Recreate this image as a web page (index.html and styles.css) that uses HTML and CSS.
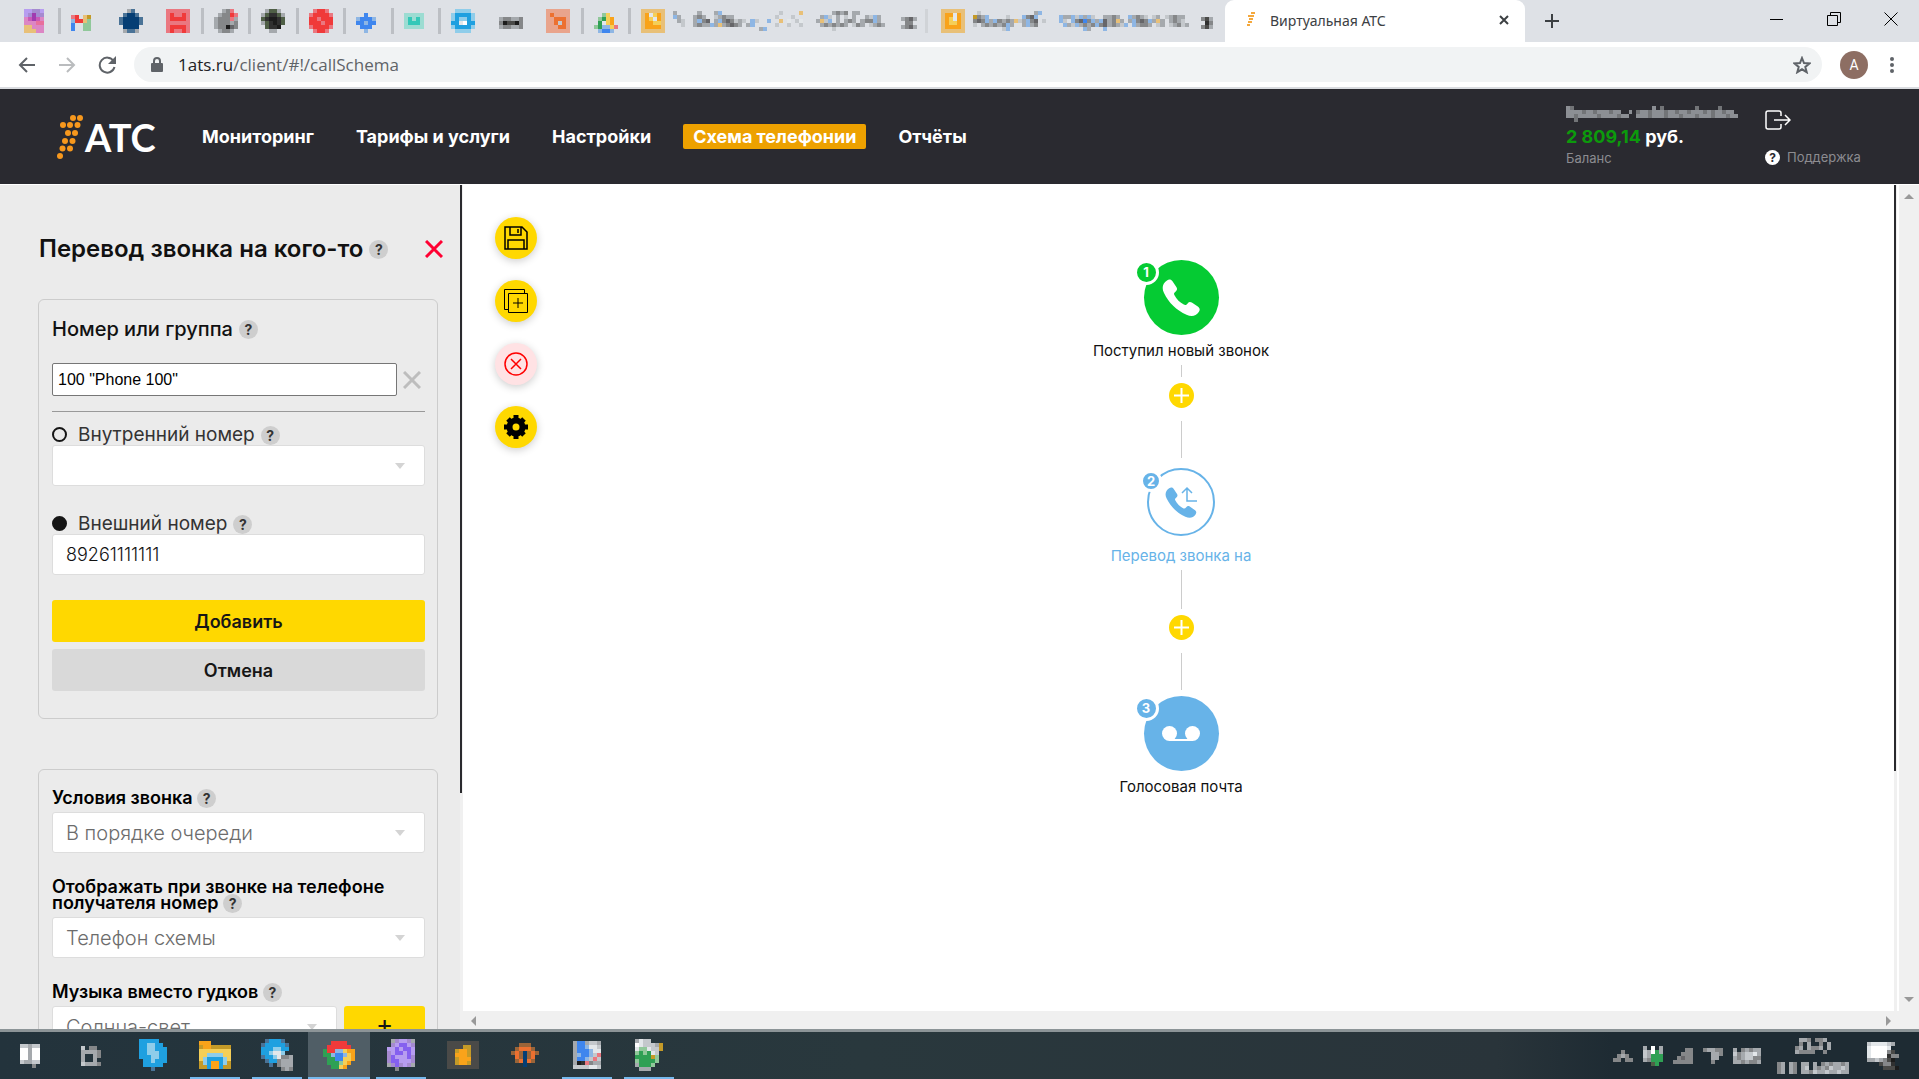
FILE: index.html
```html
<!DOCTYPE html>
<html lang="ru">
<head>
<meta charset="utf-8">
<title>Виртуальная АТС</title>
<link rel="stylesheet" href="styles.css">
</head>
<body>
<div class="tabs">
  <div class="pins">
    <span><svg class="mosaic" data-cells="uuvvu/uvPvv/mMPMm/mmmkk/oommm/ooomm"></svg></span>
    <span class="bare"><svg class="mosaic" data-cells="...../rR.oO/bRRog/B..gg/B..gg"></svg></span>
    <span class="bare"><svg class="mosaic" data-cells="..7n../.nNNn./nNNNNn/nNNNNn/.NNNN./.7nn7."></svg></span>
    <span><svg class="mosaic" data-cells="rrrrrr/rRrrRr/rRRRRr/rrrrrr/rRRRRr/rRrrRr"></svg></span>
    <span><svg class="mosaic" data-cells="..76r./.766Rr/7666r7/766676/766256/.7667."></svg></span>
    <span><svg class="mosaic" data-cells=".7DD7./7D33D7/D3223D/7D323D/.D332./..77.."></svg></span>
    <span><svg class="mosaic" data-cells=".rRRr./rRRRRr/RRrRRR/RRRrRR/rRRRRr/.rRRr."></svg></span>
    <span><svg class="mosaic" data-cells="...../..B../bBBBb/BBbBB/.BBB./..b.."></svg></span>
    <span><svg class="mosaic" data-cells="...../ttttt/tTtTt/tTTTt/ttttt/....."></svg></span>
    <span class="bare"><svg class="mosaic" data-cells=".ssss./sSSSSs/sSssSs/SS9wSS/sSSSSs/.ssss."></svg></span>
    <span class="bare"><svg class="mosaic" data-cells="....../....../766776/624426/766776/......"></svg></span>
    <span><svg class="mosaic" data-cells="pppppp/pHpppp/ppHHHp/ppH8Hp/pppHHp/pppppp"></svg></span>
    <span><svg class="mosaic" data-cells="....../..gy../.gGyY./.G9yY./gGbbyr/.bBBb."></svg></span>
  </div>
  <div class="oldtab">
    <svg class="mosaic" data-cells="oooooo/oY9yYo/oYy9Yo/oYYyyo/oYYYYo/oooooo"></svg>
    <svg class="mosaic" preserveAspectRatio="none" data-cells="7.....7...7b..............8....o.......7676.77....../b7...767..87677..........8...8......7b8.7.8.7..78b7./.78..7b65.7b656878.b8..b..o.9.89...7o8b.7.767.766b7/..8..7677b7o76567.7b.....8..8..8....7676767.867.8767./.....................7b................8............"></svg>
    <svg class="mosaic x" data-cells="./7657/.66./7657"></svg>
  </div>
  <div class="oldtab">
    <svg class="mosaic" data-cells="oooooo/oYY9Yo/oYy9Yo/oYyyYo/oYYYYo/oooooo"></svg>
    <svg class="mosaic" preserveAspectRatio="none" data-cells=".8.............7b..................................../O67b....8...b65b.....b77b8b7b8..7767..b7678.87.87677./656b7b6767o87b65.8...b8.b65B6b7b576o7.7b656b7o7.7678/8.767676b7..7b76......b78b7676b657678b.b7667.87.87687/.......8b..................b7...b...................."></svg>
    <svg class="mosaic x" data-cells="./647/.36/647"></svg>
  </div>
  <div class="tab">
    <svg width="12" height="16" viewBox="0 0 12 16"><path d="M7 1h4M4 4h6M5 7h4M4 10h4M3 13h3" stroke="#f4a83d" stroke-width="2"/></svg>
    <span>Виртуальная АТС</span>
    <svg width="12" height="12" viewBox="0 0 12 12"><path d="M2 2l8 8M10 2l-8 8" stroke="#3c4043" stroke-width="2"/></svg>
  </div>
  <svg class="newtab" width="16" height="16" viewBox="0 0 16 16"><path d="M8 1v14M1 8h14" stroke="#3c4043" stroke-width="2"/></svg>
  <div class="win">
    <svg width="14" height="14" viewBox="0 0 14 14"><path d="M0 7.500h13" stroke="#000"/></svg>
    <svg width="14" height="14" viewBox="0 0 14 14" fill="none" stroke="#000"><path d="M.5 3.500h10v10h-10zM3.500 3.500v-3h10v10h-3"/></svg>
    <svg width="14" height="14" viewBox="0 0 14 14"><path d="M.5.5l13 13M13.500.5l-13 13" stroke="#000"/></svg>
  </div>
</div>
<div class="toolbar">
  <svg width="18" height="18" viewBox="0 0 18 18" fill="none" stroke="#5f6368" stroke-width="2"><path d="M17 9H2M9 2L2 9l7 7"/></svg>
  <svg width="18" height="18" viewBox="0 0 18 18" fill="none" stroke="#babcbe" stroke-width="2"><path d="M1 9h15M9 2l7 7-7 7"/></svg>
  <svg width="18" height="18" viewBox="0 0 18 18" fill="none" stroke="#5f6368" stroke-width="2"><path d="M15.500 5A7.500 7.500 0 1 0 16.500 11"/><path d="M18 0v8h-8z" fill="#5f6368" stroke="none"/></svg>
  <div class="address">
    <svg width="12" height="16" viewBox="0 0 12 16"><path d="M1 6h10q1 0 1 1v7q0 1-1 1H1q-1 0-1-1V7q0-1 1-1z" fill="#5f6368"/><path d="M3 7V4a3 3 0 0 1 6 0v3" fill="none" stroke="#5f6368" stroke-width="2"/></svg>
    <span class="url"><b>1ats.ru</b>/client/#!/callSchema</span>
    <svg width="18" height="18" viewBox="0 0 18 18" fill="none" stroke="#5f6368" stroke-width="2"><path d="M9 2l2 5 5.500.4-4.200 3.500 1.400 5.300L9 13.300l-4.700 2.900 1.400-5.300L1.500 7.400 7 7z"/></svg>
  </div>
  <span class="avatar">A</span>
  <svg width="4" height="18" viewBox="0 0 4 18" fill="#5f6368"><circle cx="2" cy="3" r="2"/><circle cx="2" cy="9" r="2"/><circle cx="2" cy="15" r="2"/></svg>
</div>
<header class="header">
  <a class="logo" href="#">
    <svg width="28" height="46" viewBox="0 0 28 46" fill="#f7981d"><circle cx="17" cy="4" r="3"/><circle cx="24" cy="4" r="3"/><circle cx="7" cy="11" r="3"/><circle cx="14" cy="11" r="3"/><circle cx="21.500" cy="11" r="3"/><circle cx="12" cy="19" r="3"/><circle cx="19" cy="19" r="3"/><circle cx="9" cy="27" r="3"/><circle cx="16.500" cy="27" r="3"/><circle cx="6.500" cy="34.500" r="3"/><circle cx="14" cy="34.500" r="3"/><circle cx="4" cy="42" r="3"/></svg>
    <span>АТС</span>
  </a>
  <nav class="nav">
    <a href="#">Мониторинг</a>
    <a href="#">Тарифы и услуги</a>
    <a href="#">Настройки</a>
    <a href="#" class="on">Схема телефонии</a>
    <a href="#">Отчёты</a>
  </nav>
  <div class="account">
    <svg class="mosaic name" preserveAspectRatio="none" data-cells="76....................7.6........6.....6.../77776776777677..7.6776777677677677767677677/7767777767777677..77767776777677767776777677/..6........................................"></svg>
    <div class="sum"><em>2 809,14</em> руб.</div>
    <div class="muted">Баланс</div>
  </div>
  <div class="links">
    <a href="#" aria-label="Выход"><svg width="26" height="20" viewBox="0 0 26 20" fill="none" stroke="#fff" stroke-width="1.500"><path d="M16 6V3q0-2-2-2H3Q1 1 1 3v14q0 2 2 2h11q2 0 2-2v-3M9 10h15M20 5l5 5-5 5"/></svg></a>
    <a href="#" class="support"><i>?</i>Поддержка</a>
  </div>
</header>
<main class="main">
  <aside class="side">
    <form class="panel">
      <div class="head">
        <h1>Перевод звонка на кого-то</h1><i class="q">?</i>
        <button type="button" class="close" aria-label="Закрыть"><svg width="18" height="18" viewBox="0 0 18 18"><path d="M1 1l16 16M17 1L1 17" stroke="#ff0032" stroke-width="3"/></svg></button>
      </div>
      <fieldset class="box">
        <h2><label for="num">Номер или группа</label><i class="q">?</i></h2>
        <div class="numrow">
          <input id="num" class="plain" type="text" value='100 "Phone 100"'>
          <button type="button" aria-label="Удалить"><svg width="18" height="18" viewBox="0 0 18 18"><path d="M1 1l16 16M17 1L1 17" stroke="#bdbdbd" stroke-width="3"/></svg></button>
        </div>
        <hr>
        <div class="radio"><input type="radio" name="kind" id="inner"><label for="inner">Внутренний номер</label><i class="q">?</i></div>
        <div class="select"><select aria-label="Внутренний номер"><option></option></select></div>
        <div class="radio second"><input type="radio" name="kind" id="outer" checked><label for="outer">Внешний номер</label><i class="q">?</i></div>
        <input class="field" type="text" value="89261111111" aria-label="Внешний номер">
        <div class="actions">
          <button type="button" class="btn">Добавить</button>
          <button type="button" class="btn grey">Отмена</button>
        </div>
      </fieldset>
      <fieldset class="box">
        <div class="row"><div class="lbl"><label for="cond">Условия звонка</label> <i class="q">?</i></div>
        <div class="select"><select id="cond"><option>В порядке очереди</option></select></div></div>
        <div class="row"><div class="lbl"><label for="show">Отображать при звонке на телефоне получателя номер</label> <i class="q">?</i></div>
        <div class="select"><select id="show"><option>Телефон схемы</option></select></div></div>
        <div class="row"><div class="lbl"><label for="music">Музыка вместо гудков</label> <i class="q">?</i></div>
        <div class="music"><div class="select"><select id="music"><option>Солнца-свет</option></select></div><button type="button" class="btn plus">+</button></div></div>
      </fieldset>
    </form>
    <div class="track"><div class="thumb"></div></div>
  </aside>
  <section class="work">
    <div class="canvas">
      <div class="tools">
        <button aria-label="Сохранить"><svg width="24" height="24" viewBox="0 0 24 24" fill="none" stroke="#000" stroke-width="1.500"><path d="M1 1h17l5 5v17H1zM6 1v8h11V1M4 23v-9h16v9M14 3v4"/></svg></button>
        <button aria-label="Копировать"><svg width="24" height="24" viewBox="0 0 24 24" fill="none" stroke="#000"><path d="M4.500 4.500h19v19h-19zM4 20.500H.5V.5h20V4M14 9v10M9 14h10"/></svg></button>
        <button class="pink" aria-label="Удалить"><svg width="24" height="24" viewBox="0 0 24 24" fill="none" stroke="#f00" stroke-width="1.500"><circle cx="12" cy="12" r="11"/><path d="M7 7l10 10M17 7L7 17"/></svg></button>
        <button aria-label="Настройки"><svg width="24" height="24" viewBox="0 0 24 24"><circle cx="12" cy="12" r="6.500" fill="none" stroke="#000" stroke-width="6"/><path d="M12 0v5M12 19v5M0 12h5M19 12h5M4 4l3 3M17 17l3 3M20 4l-3 3M7 17l-3 3" stroke="#000" stroke-width="5"/></svg></button>
      </div>
      <div class="flow">
        <div class="node green"><b>1</b><svg width="38" height="38" viewBox="0 0 38 38"><path d="M5 1.500c2-1.500 4-1.300 5.500.8l4 6c1 1.800.6 3-.8 4.200-1.700 1.400-2.100 2.200-1.200 3.800 1.900 3.800 5.600 7.500 9.300 9.300 1.600.8 2.400.4 3.800-1.200 1.200-1.500 2.600-1.800 4.200-.8l6 4c2.200 1.500 2.400 3.300 1 5.400-3 4.300-7.300 5-12.300 2.700C14.500 31.500 6.500 23.500 2 14-.5 9 .6 4.500 5 1.500z" fill="#fff"/></svg></div>
        <div class="cap">Поступил новый звонок</div>
        <div class="line short"></div>
        <button class="add" aria-label="Добавить шаг"><svg width="15" height="15" viewBox="0 0 15 15"><path d="M7.500 0v15M0 7.500h15" stroke="#fff" stroke-width="2"/></svg></button>
        <div class="line"></div>
        <div class="node ring"><b>2</b><svg width="34" height="34" viewBox="0 0 34 34"><path transform="translate(1 2) scale(.83)" d="M5 1.500c2-1.500 4-1.300 5.500.8l4 6c1 1.800.6 3-.8 4.200-1.700 1.400-2.100 2.200-1.200 3.800 1.900 3.800 5.600 7.500 9.300 9.300 1.600.8 2.400.4 3.800-1.200 1.200-1.500 2.600-1.800 4.200-.8l6 4c2.200 1.500 2.400 3.300 1 5.400-3 4.300-7.300 5-12.300 2.700C14.500 31.500 6.500 23.500 2 14-.5 9 .6 4.500 5 1.500z" fill="#67b3e8"/><path d="M33 16H23V3M18 8l5-5 5 5" fill="none" stroke="#67b3e8" stroke-width="1.500"/></svg></div>
        <div class="cap blue">Перевод звонка на</div>
        <div class="line long"></div>
        <button class="add" aria-label="Добавить шаг"><svg width="15" height="15" viewBox="0 0 15 15"><path d="M7.500 0v15M0 7.500h15" stroke="#fff" stroke-width="2"/></svg></button>
        <div class="line close-up"></div>
        <div class="node"><b>3</b><svg width="38" height="16" viewBox="0 0 38 16" fill="#fff"><circle cx="7.500" cy="7.500" r="7.500"/><circle cx="30.500" cy="7.500" r="7.500"/><path d="M7 13h24v2H7z"/></svg></div>
        <div class="cap">Голосовая почта</div>
      </div>
      <div class="track"><div class="thumb"></div></div>
    </div>
    <div class="hbar"><i class="left"></i><i class="right"></i></div>
  </section>
  <div class="vbar"><i class="up"></i><i class="down"></i></div>
</main>
<footer class="taskbar">
  <div class="start"><svg class="mosaic" data-cells="88788/ww7ww/ww7ww/ww7ww/87788/...6."></svg></div>
  <div class="start"><svg class="mosaic" data-cells="8.66./77776/7..76/7..7./87776"></svg></div>
  <div class="app"><svg class="mosaic" data-cells="SSSSS../SSssSS./SSssSSS/SSsssSS/SSSssSS/.SSsSSS/.SSSSS./...n..."></svg></div>
  <div class="app run"><svg class="mosaic" data-cells="YYY...../OYYOOOOO/yyyyyyyy/yyssssyy/ysSSSSsy/OsSYYSsO/OOSYYSOO"></svg></div>
  <div class="app run"><svg class="mosaic" data-cells=".nSSSn../nSSSSSn./SSSssSS./SSs99s../nSSs9667/.nSS6777/..n.6777/.....676"></svg></div>
  <div class="app run now"><svg class="mosaic" data-cells="..RRRR../.RRRRRR./GRRbbyYY/GGbBBbyY/.GGBByyY/.GGGgyY./..GGyY.."></svg></div>
  <div class="app run"><svg class="mosaic" data-cells=".7vuuv7/.vuVVuv/uuVuVVu/vuVVuVu/vVuuuVv/vVVuuuv/7vVvuv7/..6...."></svg></div>
  <div class="app"><svg class="mosaic" data-cells="44444444/4444OO44/44OYYO44/44YYYO44/44OYYY44/44OYYO44/44444444"></svg></div>
  <div class="app"><svg class="mosaic" data-cells="..hhh../.hHHHh./hHhNhHh/.HhNhH./.hHNHh./...N..."></svg></div>
  <div class="app run"><svg class="mosaic" data-cells="7BB7887/7BBb998/7BBBb99/7bBBb8r/7BBb8r8/723r677/8888998"></svg></div>
  <div class="app run"><svg class="mosaic" data-cells="7988.../w98887O/9gg988O/gGgG98./GGGGOg./gGGGGg./7GGGg../.777..."></svg></div>
  <div class="tray">
    <svg class="mosaic" data-cells="..6../.676./66.66"></svg>
    <svg class="mosaic" data-cells="7.w.7/87wG7/87GGG/76GGG/..DG."></svg>
    <svg class="mosaic" data-cells="...66/..666/.6566/66666"></svg>
    <svg class="mosaic" data-cells="67766/..776/..77./..6.."></svg>
    <svg class="mosaic" data-cells="7.67677/8678897/7678866/7767667"></svg>
    <div class="clock">
      <svg class="mosaic" data-cells=".776.667/.6.7..6.7/67.7667.7/76666..6."></svg>
      <svg class="mosaic" data-cells="67.76.77.7.6767767/67.76.78.767687787/67.76.776877877877"></svg>
    </div>
    <svg class="mosaic" data-cells="8999987./9wwww9../9wwww64./9wwww366/7787642./...4663./....4442"></svg>
  </div>
</footer>
<script src="mosaic.js"></script>
</body>
</html>
```
FILE: mosaic.js
```js
// Paints coarse pixel icons: one letter is one 4px cell, "/" ends a row.
const ink = {
  2: '#1c1c1c', 3: '#303030', 4: '#4a4a48', 5: '#666669', 6: '#858789', 7: '#a5a9ad', 8: '#c4c8cc', 9: '#e3e7ea', w: '#ffffff',
  u: '#b79df0', v: '#a58ad0', V: '#8560ef', P: '#a03bb0', m: '#dc86c4', M: '#c85ab8', k: '#e86f9c', o: '#e8c078', O: '#c49a28',
  r: '#ea7780', R: '#f03a3a', b: '#8eb6e4', B: '#3f86ee', g: '#90c89a', G: '#2fa054', n: '#4a7397', N: '#053e74', D: '#4f5f46',
  t: '#9cdcd2', T: '#34c8b8', s: '#8fcdea', S: '#1fa0e0', p: '#e9a48c', H: '#ec7030', h: '#9a6438', y: '#f5cf58', Y: '#f9a31a'
};
for (const svg of document.querySelectorAll('.mosaic')) {
  const rows = svg.dataset.cells.split('/');
  const cols = Math.max(...rows.map(r => r.length));
  svg.setAttribute('viewBox', `0 0 ${cols} ${rows.length}`);
  svg.setAttribute('width', cols * 4);
  svg.setAttribute('height', rows.length * 4);
  svg.innerHTML = rows.map((row, y) => [...row].map((c, x) =>
    ink[c] ? `<path d="M${x} ${y}h1v1h-1z" fill="${ink[c]}"/>` : '').join('')).join('');
}
```
FILE: styles.css
```css
* { box-sizing: border-box; }
body {
  margin: 0; height: 100vh; display: flex; flex-direction: column; overflow: hidden;
  font-family: Inter, "Open Sans", sans-serif; color: #111; background: #fff;
}
svg { display: block; flex: none; }
.mosaic { shape-rendering: crispEdges; }
button { border: 0; padding: 0; background: none; font: inherit; color: inherit; display: grid; place-items: center; }
a { color: inherit; text-decoration: none; }
i, em { font-style: normal; }

.tabs { flex: none; height: 42px; display: flex; align-items: center; background: #dee1e6; }
.pins { width: 641px; padding-left: 24px; display: grid; grid-template-columns: repeat(13, 1fr); }
.pins span { height: 26px; display: flex; align-items: center; justify-content: space-between; padding-right: 10px; }
.pins span::after { content: ""; width: 3px; height: 26px; background: #bcbfc4; }
.pins .bare::after { background: none; }
.oldtab { width: 284px; display: flex; align-items: center; gap: 8px; }
.oldtab + .oldtab { width: 300px; border-left: 3px solid #d0d3d7; padding-left: 13px; }
.oldtab .mosaic:nth-child(2) { width: 216px; height: 20px; }
.oldtab .x { margin-left: 4px; }
.tab { width: 300px; height: 42px; background: #fff; border-radius: 9px 9px 0 0; display: flex; align-items: center; padding: 0 15px 2px 19px; gap: 14px; font: 14px "Noto Sans", sans-serif; color: #3c4043; }
.tab span { flex: 1; }
.newtab { margin-left: 19px; }
.win { margin: 0 21px 4px auto; display: flex; gap: 43px; }

.toolbar { flex: none; height: 47px; border-bottom: 2px solid #dadce0; display: flex; align-items: center; padding: 0 25px 0 18px; gap: 22px; background: #fff; }
.address { flex: 1; height: 35px; border-radius: 18px; background: #f1f3f4; display: flex; align-items: center; gap: 15px; padding: 0 11px 0 17px; margin: 0 -4px; }
.url { flex: 1; font: 17px "Open Sans", sans-serif; color: #5f6368; }
.url b { font-weight: 400; color: #202124; }
.avatar { width: 28px; height: 28px; border-radius: 50%; background: #8d6e63; color: #fff; font: 14px/28px Roboto, sans-serif; text-align: center; }

.header { flex: none; height: 95px; background: #2a2a30; color: #fff; display: flex; align-items: center; padding: 0 56px; }
.logo { display: flex; align-items: center; gap: 1px; width: 136px; font: 700 38px Lato, sans-serif; }
.nav { display: flex; gap: 22px; font-weight: 700; font-size: 18px; line-height: 25px; }
.nav a { padding: 0 10px; border-radius: 2px; }
.nav .on { background: #eda100; }
.account { margin-left: auto; width: 199px; font-size: 13px; }
.name { width: 172px; height: 16px; opacity: .8; }
.sum { font-weight: 700; font-size: 18px; line-height: 24px; padding-top: 3px; }
.sum em { color: #0c9a0c; }
.muted, .support { color: #8c8c90; line-height: 18px; }
.links { width: 98px; display: grid; gap: 18px; font-size: 13px; padding-top: 3px; }
.support { display: flex; align-items: center; gap: 7px; }
.support i { width: 15px; height: 15px; border-radius: 50%; background: #fff; color: #2a2a30; font: 700 12px/15px Inter, sans-serif; text-align: center; }

.main { flex: 1; min-height: 0; display: grid; grid-template-columns: 463px 1fr 20px; border-top: 1px solid #fff; }
.side { min-height: 0; overflow: hidden; display: flex; background: #ebebeb; }
.panel { flex: 1; padding: 52px 16px 0 38px; }
.track { flex: none; width: 3px; background: #f0f0f0; }
.thumb { width: 2px; height: 72%; background: #2a2a2e; }
.head { display: flex; align-items: center; margin-bottom: 38px; height: 24px; padding-right: 1px; }
h1 { margin: 0 6px 0 1px; font-size: 24px; font-weight: 600; line-height: 24px; white-space: nowrap; }
.q { display: inline-block; width: 19px; height: 19px; border-radius: 50%; background: #cecece; color: #333; font: 700 14px/19px Inter, sans-serif; text-align: center; flex: none; }
.close { margin-left: auto; }
.box { margin: 0 6px 50px 0; border: 1px solid #ccc; border-radius: 6px; padding: 18px 12px 27px 13px; }
h2 { margin: 0 0 23px; font-size: 20px; font-weight: 500; line-height: 22px; display: flex; align-items: center; gap: 6px; }
.numrow { display: flex; align-items: center; gap: 6px; padding-right: 4px; }
.plain { flex: 1; min-width: 0; height: 33px; border: 1px solid #767676; border-radius: 2px; padding: 0 5px; font: 16px "Liberation Sans", sans-serif; background: #fff; }
hr { margin: 15px 0 13px; border: 0; border-top: 1px solid #999; }
.radio { display: flex; align-items: center; gap: 6px; height: 20px; font-size: 19px; line-height: 20px; color: #333; }
.radio input { appearance: none; margin: 0 5px 2px 0; width: 15px; height: 15px; border: 2px solid #161616; border-radius: 50%; }
.radio input:checked { background: #161616; }
.second { margin-top: 28px; }
.select { position: relative; flex: 1; }
.select::after { content: ""; position: absolute; right: 20px; top: 18px; border: 5px solid transparent; border-top: 6px solid #d4d4d4; border-bottom: 0; }
.field, select { display: block; appearance: none; width: 100%; height: 41px; border: 1px solid #ddd; border-radius: 3px; background: #fff; padding: 0 13px; font: 300 20px Inter, sans-serif; color: #6c6c6c; }
.field { font-size: 18px; color: #111; }
.actions { display: grid; gap: 7px; margin-top: 25px; }
.btn { height: 42px; border-radius: 3px; background: #ffd800; color: #161616; font-weight: 600; font-size: 18px; }
.grey { background: #d9d9d9; }
.lbl { font-size: 18px; font-weight: 600; line-height: 16px; margin-bottom: 6px; padding-top: 2px; color: #000; }
.lbl .q { margin: -4px 0 -4px; }
.row { margin-bottom: 24px; }
.music { display: flex; gap: 7px; }
.plus { width: 81px; font-size: 26px; line-height: 26px; font-weight: 400; padding-bottom: 6px; }

.work { min-width: 0; min-height: 0; display: flex; flex-direction: column; }
.canvas { flex: 1; min-height: 0; display: grid; grid-template-columns: 1fr auto 1fr; position: relative; }
.canvas > .track { position: absolute; right: 2px; top: 0; bottom: 0; }
.canvas > .track .thumb { height: 71%; }
.tools { padding: 32px 0 0 32px; display: grid; gap: 21px; align-content: start; justify-items: start; }
.tools button { width: 42px; height: 42px; border-radius: 50%; background: #ffd800; box-shadow: 0 2px 8px #0003; }
.tools .pink { background: #ffe2e4; }
.flow { padding-top: 75px; display: flex; flex-direction: column; align-items: center; }
.node { position: relative; width: 75px; height: 75px; border-radius: 50%; background: #67b3e8; display: grid; place-items: center; }
.node b { position: absolute; left: -10px; top: 0; width: 25px; height: 25px; border: 3px solid #fff; border-radius: 50%; background: #67b3e8; color: #fff; font-size: 13px; line-height: 19px; text-align: center; }
.green, .green b { background: #05cb33; }
.ring { width: 68px; height: 68px; background: #fff; border: 2px solid #67b3e8; }
.ring b { left: -9px; top: 0; width: 22px; height: 22px; line-height: 16px; }
.cap { font-size: 15px; line-height: 18px; margin: 7px 0 5px; }
.ring + .cap { margin-top: 11px; }
.blue { color: #67b3e8; }
.line { width: 1px; height: 37px; background: #ccc; margin: 13px 0 10px; }
.line.short { height: 12px; margin: 0 0 6px; }
.line.long { height: 39px; margin: 0 0 6px; }
.line.close-up { margin-bottom: 6px; }
.add { width: 25px; height: 25px; border-radius: 50%; background: #ffd800; }
.hbar { flex: none; height: 18px; background: #f0f0f0; display: flex; justify-content: space-between; align-items: center; padding: 2px 8px 0; }
.left { border: 5px solid transparent; border-right-color: #999; border-left: 0; }
.right { border: 5px solid transparent; border-left-color: #999; border-right: 0; }
.vbar { background: #f0f0f0; display: flex; flex-direction: column; justify-content: space-between; align-items: center; padding: 9px 0 27px; }
.up { border: 5px solid transparent; border-bottom-color: #999; border-top: 0; }
.down { border: 5px solid transparent; border-top-color: #999; border-bottom: 0; }

.taskbar { flex: none; height: 50px; border-top: 3px solid #8c9497; background: linear-gradient(90deg, #23333c, #29383d 45%, #29343a 78%, #1e2b33 84%); display: flex; }
.start { width: 60px; display: grid; place-items: center; }
.start + .start { width: 62px; }
.app { width: 62px; padding-bottom: 2px; display: grid; place-items: center; position: relative; }
.run::after { content: ""; position: absolute; left: 6px; right: 6px; bottom: 0; height: 2px; background: #76b9ed; }
.now { background: #505e66; }
.now::after { left: 0; right: 0; }
.tray { margin-left: auto; padding-right: 20px; display: flex; align-items: center; gap: 10px; }
.clock { display: grid; justify-items: center; gap: 8px; margin: 0 8px 0 6px; }
```
